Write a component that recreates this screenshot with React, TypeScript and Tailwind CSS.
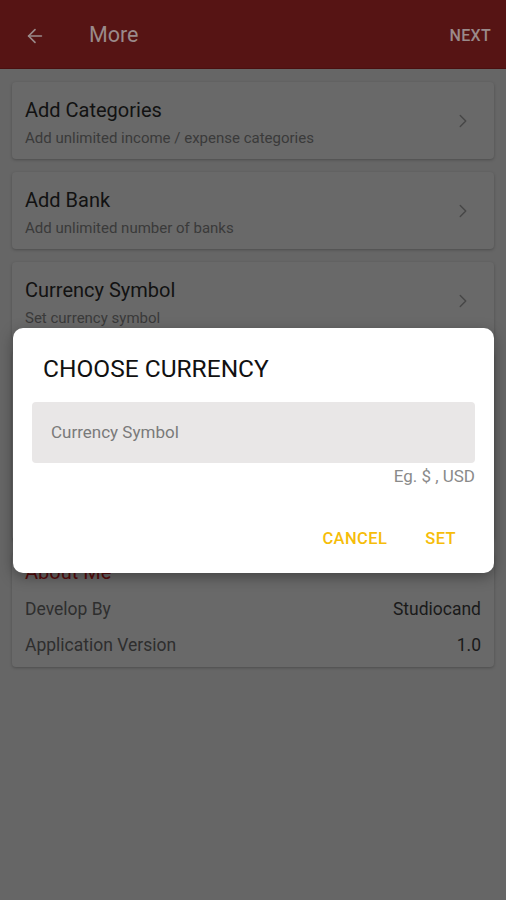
import { ArrowLeft, ChevronRight } from "lucide-react";

interface ItemProps {
  title: string;
  subtitle: string;
}

function SettingCard({ title, subtitle }: ItemProps) {
  return (
    <div className="flex h-[77px] items-center justify-between rounded-[4px] bg-[#696969] pl-[13px] pr-[20px] shadow-[0_1px_3px_rgba(0,0,0,0.25)]">
      <div className="flex flex-col pt-[3px]">
        <span className="text-[20px] leading-[24px] text-[#121212]">{title}</span>
        <span className="mt-[7px] text-[15px] leading-[18px] text-[#3a3a3a]">{subtitle}</span>
      </div>
      <ChevronRight className="h-[22px] w-[22px] text-[#474747]" strokeWidth={1.6} />
    </div>
  );
}

function InfoRow({ label, value }: { label: string; value: string }) {
  return (
    <div className="flex h-[36px] items-center justify-between">
      <span className="text-[17.5px] text-[#2e2e2e]">{label}</span>
      <span className="text-[17.5px] text-[#1a1a1a]">{value}</span>
    </div>
  );
}

export default function App() {
  return (
    <div className="relative min-h-[900px] w-[506px] bg-[#666666] font-['Roboto','Noto_Sans',sans-serif]">
      <header className="flex h-[69px] items-center border-b border-[#4a0f0f] bg-[#561414] pl-[24px] pr-[15px] pt-[3px]">
        <ArrowLeft className="h-[22px] w-[22px] text-[#9a8a8a]" strokeWidth={1.8} />
        <span className="ml-[43px] text-[21.5px] text-[#9a8a8a]">More</span>
        <span className="ml-auto text-[16px] font-medium tracking-[0.3px] text-[#9a8a8a]">NEXT</span>
      </header>

      <main className="flex flex-col gap-[13px] px-[12px] pt-[13px]">
        <SettingCard title="Add Categories" subtitle="Add unlimited income / expense categories" />
        <SettingCard title="Add Bank" subtitle="Add unlimited number of banks" />
        <SettingCard title="Currency Symbol" subtitle="Set currency symbol" />
        <div className="h-[188px] rounded-[4px] bg-[#696969] shadow-[0_1px_3px_rgba(0,0,0,0.25)]" />
        <div className="flex flex-col rounded-[4px] bg-[#696969] px-[13px] pb-[4px] pt-[5px] shadow-[0_1px_3px_rgba(0,0,0,0.25)]">
          <span className="mb-[5px] text-[20px] leading-[28px] text-[#5a0c0c]">About Me</span>
          <InfoRow label="Develop By" value="Studiocand" />
          <InfoRow label="Application Version" value="1.0" />
        </div>
      </main>

      <div className="absolute left-[13px] top-[328px] flex h-[245px] w-[481px] flex-col rounded-[10px] bg-white shadow-[0_4px_14px_rgba(0,0,0,0.35)]">
        <h2 className="ml-[30px] mt-[27px] text-[24.5px] leading-[28px] text-[#111111]">CHOOSE CURRENCY</h2>
        <div className="mx-[19px] mt-[19px] flex h-[61px] items-center rounded-[4px] bg-[#e9e7e7] px-[19px]">
          <span className="text-[17px] text-[#7a7a7a]">Currency Symbol</span>
        </div>
        <span className="mr-[19px] mt-[3px] self-end text-[17px] leading-[20px] text-[#8a8a8a]">Eg. $ , USD</span>
        <div className="mt-auto mb-[21px] flex justify-end gap-[38px] pr-[38px]">
          <span className="text-[16.5px] font-medium tracking-[0.4px] text-[#f6bd0a]">CANCEL</span>
          <span className="text-[16.5px] font-medium tracking-[0.4px] text-[#f6bd0a]">SET</span>
        </div>
      </div>
    </div>
  );
}
